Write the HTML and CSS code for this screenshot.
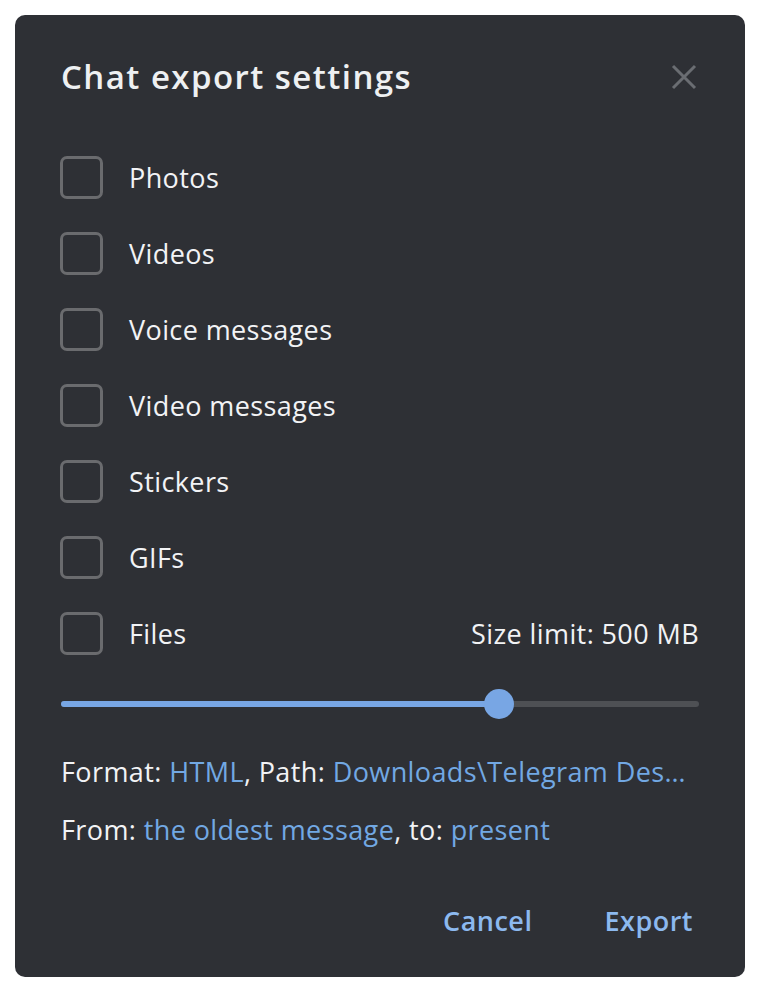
FILE: index.html
```html
<!DOCTYPE html>
<html>
<head>
<meta charset="utf-8">
<link rel="stylesheet" href="styles.css">
</head>
<body>
<div class="dialog">
  <div class="header">
    <h1 class="title">Chat export settings</h1>
    <svg class="close" width="26" height="26" viewBox="0 0 26 26"><path d="M2 2L24 24M24 2L2 24" stroke="#6a6d72" stroke-width="3" fill="none"/></svg>
  </div>
  <div class="options">
    <div class="row"><span class="box"></span><span class="label">Photos</span></div>
    <div class="row"><span class="box"></span><span class="label">Videos</span></div>
    <div class="row"><span class="box"></span><span class="label">Voice messages</span></div>
    <div class="row"><span class="box"></span><span class="label">Video messages</span></div>
    <div class="row"><span class="box"></span><span class="label">Stickers</span></div>
    <div class="row"><span class="box"></span><span class="label">GIFs</span></div>
    <div class="row"><span class="box"></span><span class="label">Files</span><span class="limit">Size limit: 500 MB</span></div>
  </div>
  <div class="slider">
    <div class="fill" style="width: 68.7%"></div>
    <div class="thumb" style="left: 68.7%"></div>
  </div>
  <p class="info">Format: <span class="link">HTML</span>, Path: <span class="link">Downloads\Telegram Des…</span></p>
  <p class="info">From: <span class="link">the oldest message</span>, to: <span class="link">present</span></p>
  <div class="buttons">
    <span class="btn">Cancel</span>
    <span class="btn">Export</span>
  </div>
</div>
</body>
</html>
```

FILE: styles.css
```css
html, body {
  margin: 0;
  padding: 0;
  background: #ffffff;
}
body {
  padding: 15px 16px 17px 15px;
  font-family: "Open Sans", "Noto Sans", sans-serif;
}
.dialog {
  width: 730px;
  height: 962px;
  box-sizing: border-box;
  background: #2e3035;
  border-radius: 10px;
  padding: 0 46px 0 46px;
  color: #f2f3f5;
  display: flex;
  flex-direction: column;
}
.header {
  display: flex;
  align-items: center;
  justify-content: space-between;
  height: 124px;
}
.title {
  margin: 0;
  font-size: 33px;
  font-weight: 600;
  letter-spacing: 1.45px;
  line-height: 44px;
  color: #eef0f2;
}
.close {
  margin-right: 2px;
}
.options {
  display: flex;
  flex-direction: column;
}
.row {
  height: 76px;
  display: flex;
  align-items: center;
  font-size: 27px;
  letter-spacing: 0.4px;
}
.box {
  width: 43px;
  height: 43px;
  box-sizing: border-box;
  border: 3.5px solid #6a6b6e;
  border-radius: 7px;
  flex: none;
  margin-left: -1px;
}
.label {
  margin-left: 26px;
  flex: 1;
}
.limit {
  flex: none;
}
.slider {
  position: relative;
  height: 6px;
  border-radius: 3px;
  background: #4e5054;
  margin-top: 30px;
}
.fill {
  height: 6px;
  border-radius: 3px;
  background: #78a6e4;
}
.thumb {
  position: absolute;
  top: 50%;
  width: 30px;
  height: 30px;
  border-radius: 50%;
  background: #78a6e4;
  transform: translate(-50%, -50%);
}
.info {
  margin: 0;
  font-size: 27px;
  letter-spacing: 0.4px;
  line-height: 36px;
}
.slider + .info {
  margin-top: 47px;
}
.info + .info {
  margin-top: 22px;
}
.link {
  color: #72a8e3;
}
.buttons {
  display: flex;
  justify-content: flex-end;
  gap: 72px;
  margin-top: 55px;
  margin-right: 6px;
}
.btn {
  font-size: 27px;
  font-weight: 600;
  letter-spacing: 0.5px;
  line-height: 36px;
  color: #8cb9ef;
}
```
